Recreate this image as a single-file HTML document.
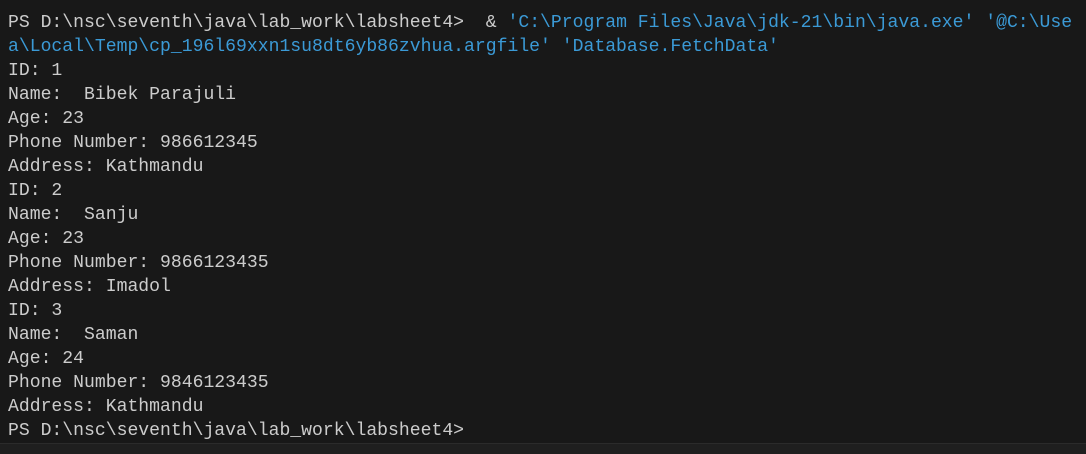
<!DOCTYPE html>
<html><head><style>
html,body{margin:0;padding:0;width:1086px;height:453px;overflow:hidden;background:#181818;}
pre{margin:0;position:absolute;left:8px;top:11px;font-family:"Liberation Mono",monospace;font-size:18.1px;line-height:24px;color:#cccccc;white-space:pre;}
.b{color:#3b9ad6;}
.bot{position:absolute;left:0;top:443px;width:1086px;height:10px;background:#1f1f1f;border-top:1px solid #2b2b2b;}
</style></head><body>
<pre>PS D:\nsc\seventh\java\lab_work\labsheet4>  &amp; <span class="b">'C:\Program Files\Java\jdk-21\bin\java.exe' '@C:\Use</span>
<span class="b">a\Local\Temp\cp_196l69xxn1su8dt6yb86zvhua.argfile' 'Database.FetchData'</span>
ID: 1
Name:  Bibek Parajuli
Age: 23
Phone Number: 986612345
Address: Kathmandu
ID: 2
Name:  Sanju
Age: 23
Phone Number: 9866123435
Address: Imadol
ID: 3
Name:  Saman
Age: 24
Phone Number: 9846123435
Address: Kathmandu
PS D:\nsc\seventh\java\lab_work\labsheet4></pre>
<div class="bot"></div>
</body></html>
